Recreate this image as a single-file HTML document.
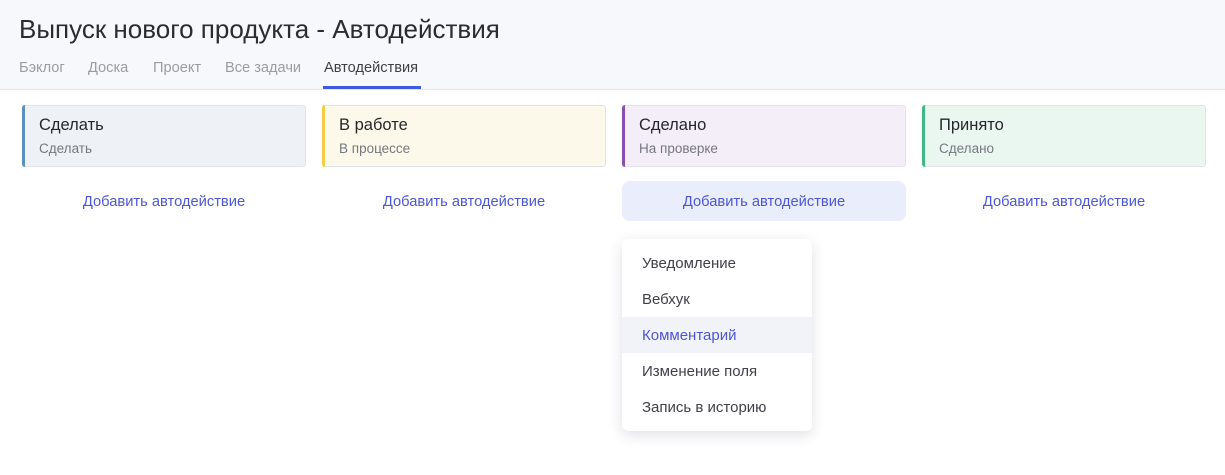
<!DOCTYPE html>
<html><head><meta charset="utf-8"><style>
*{box-sizing:border-box;margin:0;padding:0}
body{width:1225px;height:475px;background:#fff;font-family:"Liberation Sans",sans-serif;position:relative;overflow:hidden;color:#2b2d33}
.hdr{position:absolute;left:0;top:0;width:1225px;height:90px;background:#f7f8fb;border-bottom:1px solid #e3e5ea}
.title{position:absolute;left:19px;top:14px;font-size:26px;color:#2a2c31}
.tab{position:absolute;top:60px;font-size:14.6px;color:#9a9ca3}
.tab.act{color:#3d3f45}
.ul{position:absolute;left:323px;top:86px;width:98px;height:3px;background:#3e5ae0}
.card{position:absolute;top:105px;width:284px;height:62px;border:1px solid #e2e4ea;border-radius:3px}
.card .t{position:absolute;left:16px;top:10px;font-size:16.5px;color:#25272c}
.card .s{position:absolute;left:16px;top:35px;font-size:13.5px;color:#75777e}
.card .b{position:absolute;left:-1px;top:-1px;bottom:-1px;width:3px;border-radius:3px 0 0 3px}
.add{position:absolute;top:181px;width:284px;height:40px;border-radius:8px;font-size:14.7px;color:#4b57d6;text-align:center;line-height:43px}
.menu{position:absolute;left:622px;top:239px;width:190px;height:192px;background:#fff;border-radius:6px;box-shadow:0 4px 14px rgba(30,40,70,.14)}
.it{position:absolute;left:0;width:190px;height:36px;line-height:38px;padding-left:20px;font-size:15px;color:#3f4147}
</style></head><body>
<div class="hdr">
<div class="title">Выпуск нового продукта - Автодействия</div>
<div class="tab" style="left:19px">Бэклог</div>
<div class="tab" style="left:88px">Доска</div>
<div class="tab" style="left:153px">Проект</div>
<div class="tab" style="left:225px">Все задачи</div>
<div class="tab act" style="left:324px">Автодействия</div>
<div class="ul"></div>
</div>
<div class="card" style="left:22px;background:#eef2f6"><div class="b" style="background:#5a8fc0"></div><div class="t">Сделать</div><div class="s">Сделать</div></div>
<div class="card" style="left:322px;background:#fdf9ea"><div class="b" style="background:#f4cd46"></div><div class="t">В работе</div><div class="s">В процессе</div></div>
<div class="card" style="left:622px;background:#f4eef8"><div class="b" style="background:#8a4eb0"></div><div class="t">Сделано</div><div class="s">На проверке</div></div>
<div class="card" style="left:922px;background:#eaf7f1"><div class="b" style="background:#3fb885"></div><div class="t">Принято</div><div class="s">Сделано</div></div>
<div class="add" style="left:22px">Добавить автодействие</div>
<div class="add" style="left:322px">Добавить автодействие</div>
<div class="add" style="left:622px;background:#eaedfb">Добавить автодействие</div>
<div class="add" style="left:922px">Добавить автодействие</div>
<div class="menu">
<div class="it" style="top:6px">Уведомление</div>
<div class="it" style="top:42px">Вебхук</div>
<div class="it" style="top:78px;background:#f2f3f8;color:#4b57d6">Комментарий</div>
<div class="it" style="top:114px">Изменение поля</div>
<div class="it" style="top:150px">Запись в историю</div>
</div>
</body></html>
